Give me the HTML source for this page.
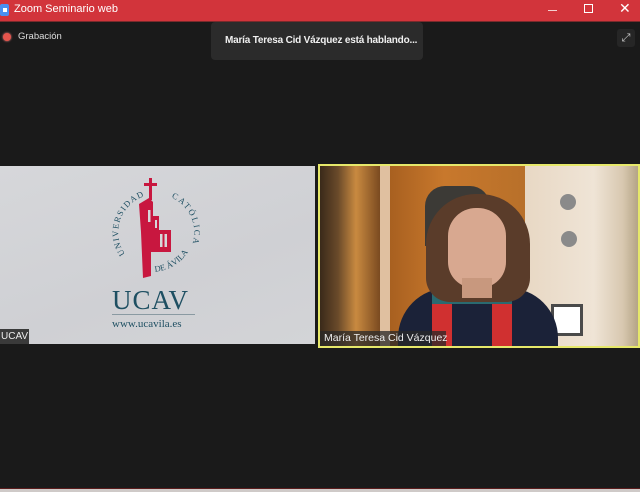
<!DOCTYPE html>
<html><head><meta charset="utf-8"><style>
*{margin:0;padding:0;box-sizing:border-box}
body{width:640px;height:492px;background:#1a1a1a;position:relative;overflow:hidden;font-family:"Liberation Sans",sans-serif}
.abs{position:absolute}
</style></head><body>
<div class="abs" style="left:0;top:0;width:640px;height:21px;background:#d2343b"></div>
<div class="abs" style="left:0;top:4px;width:9px;height:12px;background:#4a8ff0;border-radius:2px"></div>
<div class="abs" style="left:3px;top:8px;width:4px;height:4px;background:#fff"></div>
<div class="abs" style="left:14px;top:3px;color:#fff;font-size:11px">Zoom Seminario web</div>
<div class="abs" style="left:548px;top:10px;width:9px;height:1px;background:#f4d0d0"></div>
<div class="abs" style="left:584px;top:4px;width:9px;height:9px;border:1px solid #fff"></div>
<div class="abs" style="left:619px;top:0px;color:#fff;font-size:14px">✕</div>
<div class="abs" style="left:0;top:21px;width:640px;height:1px;background:#7a2a2c"></div>
<div class="abs" style="left:3px;top:33px;width:8px;height:8px;border-radius:50%;background:#e5544c;box-shadow:0 0 2px #f88"></div>
<div class="abs" style="left:18px;top:31px;color:#ddd;font-size:9.5px">Grabación</div>
<div class="abs" style="left:211px;top:22px;width:212px;height:38px;background:#2b2b2b;border-radius:4px"></div>
<div class="abs" style="left:225px;top:35px;color:#f0f0f0;font-size:10px;font-weight:bold;letter-spacing:-0.2px">María Teresa Cid Vázquez está hablando...</div>
<div class="abs" style="left:617px;top:29px;width:18px;height:18px;background:#262626;border-radius:3px;color:#ccc;font-size:11px;line-height:18px;text-align:center">⤢</div>
<!-- left tile -->
<div class="abs" style="left:0;top:166px;width:315px;height:178px;background:linear-gradient(160deg,#d6d7da,#cfd0d4 60%,#d3d4d7)"></div>
<svg class="abs" style="left:105px;top:172px" width="96" height="112" viewBox="0 0 96 112">
<defs>
<path id="top" d="M20 82 A38 38 0 1 1 88 70"/>
<path id="bot" d="M46 100 A44 44 0 0 0 90 60"/>
</defs>
<text font-family="Liberation Serif" font-size="8.5" fill="#1e4f62"><textPath href="#top" textLength="70">UNIVERSIDAD</textPath></text>
<text font-family="Liberation Serif" font-size="8.5" fill="#1e4f62"><textPath href="#top" startOffset="98" textLength="55">CATÓLICA</textPath></text>
<text font-family="Liberation Serif" font-size="8.5" fill="#1e4f62"><textPath href="#bot" startOffset="4">DE ÁVILA</textPath></text>
<rect x="44" y="6" width="3" height="22" fill="#c8173f"/><rect x="39" y="11" width="13" height="3" fill="#c8173f"/>
<path d="M34 32 L44 26 L48 30 L48 44 L54 44 L54 58 L66 58 L66 80 L46 80 L46 104 L38 106 L36 60 Z" fill="#c8173f"/>
<rect x="43" y="38" width="2.5" height="12" fill="#d6d7da"/>
<rect x="50" y="48" width="2" height="8" fill="#d6d7da"/>
<rect x="55" y="62" width="2.5" height="13" fill="#d6d7da"/><rect x="59.5" y="62" width="2.5" height="13" fill="#d6d7da"/>
</svg>
<div class="abs" style="left:112px;top:285px;color:#1e4f62;font-family:'Liberation Serif',serif;font-size:27px;letter-spacing:1px">UCAV</div>
<div class="abs" style="left:112px;top:314px;width:83px;height:1px;background:#8a9aa2"></div>
<div class="abs" style="left:112px;top:318px;color:#1e4f62;font-family:'Liberation Serif',serif;font-size:11px">www.ucavila.es</div>
<div class="abs" style="left:0;top:329px;width:29px;height:15px;background:#3a3a3a"></div>
<div class="abs" style="left:1px;top:331px;color:#eee;font-size:10px">UCAV</div>
<!-- right tile -->
<div class="abs" style="left:318px;top:164px;width:322px;height:184px;border:2px solid #e6e86a;overflow:hidden;background:#b06a28">
 <div class="abs" style="left:0;top:0;width:60px;height:180px;background:linear-gradient(90deg,#3a2a1a,#6a4a2a 30%,#c98a40 60%,#7a4a20)"></div>
 <div class="abs" style="left:60px;top:0;width:10px;height:180px;background:#e0c0a0"></div>
 <div class="abs" style="left:70px;top:0;width:135px;height:180px;background:linear-gradient(90deg,#a86020,#c8782c 40%,#b8702a)"></div>
 <div class="abs" style="left:105px;top:20px;width:65px;height:60px;background:#3c3a36;border-radius:20px 20px 0 0"></div>
 <div class="abs" style="left:205px;top:0;width:115px;height:180px;background:linear-gradient(90deg,#e8d8c4,#efe4d6 60%,#d8c8b0 85%,#b0a080)"></div>
 <div class="abs" style="left:240px;top:28px;width:16px;height:16px;border-radius:50%;background:#8a8a8a"></div>
 <div class="abs" style="left:241px;top:65px;width:16px;height:16px;border-radius:50%;background:#8a8a8a"></div>
 <div class="abs" style="left:231px;top:138px;width:32px;height:32px;background:#fff;border:3px solid #4a4a4a"></div>
 <div class="abs" style="left:78px;top:122px;width:160px;height:80px;background:#1b2238;border-radius:50px 50px 0 0"></div>
 <div class="abs" style="left:112px;top:130px;width:20px;height:50px;background:#d03030"></div>
 <div class="abs" style="left:172px;top:130px;width:20px;height:50px;background:#d03030"></div>
 <div class="abs" style="left:112px;top:126px;width:80px;height:12px;background:#2a6a70"></div>
 <div class="abs" style="left:106px;top:28px;width:104px;height:108px;background:#5a3c2a;border-radius:50px 50px 24px 24px"></div>
 <div class="abs" style="left:128px;top:42px;width:58px;height:80px;background:#d8a890;border-radius:28px 28px 26px 26px"></div>
 <div class="abs" style="left:142px;top:112px;width:30px;height:20px;background:#c8987e"></div>
 <div class="abs" style="left:0;top:165px;width:126px;height:15px;background:rgba(40,40,40,.75)"></div>
 <div class="abs" style="left:4px;top:166px;color:#eee;font-size:10.5px">María Teresa Cid Vázquez</div>
</div>
<div class="abs" style="left:0;top:488px;width:640px;height:1px;background:#5a1c1c"></div>
<div class="abs" style="left:0;top:489px;width:640px;height:3px;background:#cfcac8"></div>
</body></html>
